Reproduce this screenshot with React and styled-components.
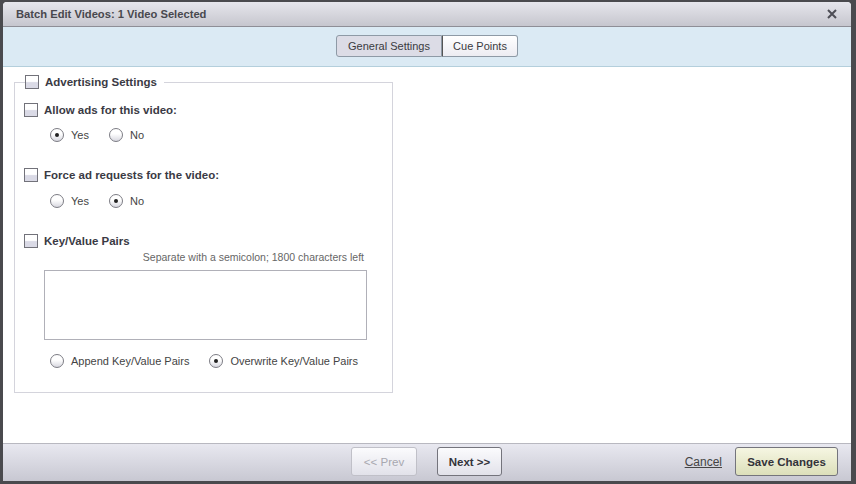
import React from "react";
import styled, { createGlobalStyle } from "styled-components";

const Global = createGlobalStyle`
  html, body { margin: 0; padding: 0; }
  body {
    width: 856px;
    height: 484px;
    overflow: hidden;
    background: #4a4a4e;
    font-family: "Liberation Sans", Arial, sans-serif;
  }
`;

const Dialog = styled.div`
  position: relative;
  margin: 2px 0 0 3px;
  width: 848px;
  height: 479px;
  display: flex;
  flex-direction: column;
  background: #fff;
  border-radius: 4px 4px 0 0;
  overflow: hidden;
`;

const TitleBar = styled.div`
  height: 24px;
  flex: none;
  display: flex;
  align-items: center;
  justify-content: space-between;
  padding: 0 14px 0 13px;
  background: linear-gradient(#e6e6ec, #c6c6ce);
  border-bottom: 1px solid #8e8e96;
  color: #48484e;
  font-size: 11.2px;
  font-weight: bold;
`;

const TabBar = styled.div`
  height: 40px;
  flex: none;
  display: flex;
  justify-content: center;
  align-items: flex-start;
  padding-top: 8px;
  box-sizing: border-box;
  background: #dbeaf4;
  border-bottom: 1px solid #b4cfdc;
`;

const Tab = styled.div`
  height: 22px;
  width: ${(p) => p.$w}px;
  box-sizing: border-box;
  display: flex;
  align-items: center;
  justify-content: center;
  font-size: 11px;
  color: #3a3a40;
  border: 1px solid #8e9aa6;
  background: ${(p) =>
    p.$active ? "#dcdce6" : "linear-gradient(#ffffff, #ececf2)"};
  border-radius: ${(p) => (p.$first ? "3px 0 0 3px" : "0 3px 3px 0")};
  border-left-color: ${(p) => (p.$first ? "#8e9aa6" : "#555")};
`;

const Body = styled.div`
  flex: 1;
  padding: 8px 0 0 11px;
`;

const Fieldset = styled.fieldset`
  width: 379px;
  height: 318px;
  box-sizing: border-box;
  margin: 0;
  padding: 0 0 0 9px;
  border: 1px solid #d4d4dc;
  color: #3a3a44;
`;

const Legend = styled.legend`
  display: flex;
  align-items: center;
  gap: 6px;
  padding: 0 7px 0 0;
  margin-left: 1px;
  font-size: 11.5px;
  font-weight: bold;
`;

const Box = styled.span`
  width: 14px;
  height: 14px;
  flex: none;
  box-sizing: border-box;
  border: 1px solid #72727a;
  background: linear-gradient(#ffffff 45%, #dadae6 55%);
`;

const CheckRow = styled.div`
  display: flex;
  align-items: center;
  gap: 6px;
  margin-top: ${(p) => p.$top}px;
  font-size: 11.5px;
  font-weight: bold;
`;

const RadioRow = styled.div`
  display: flex;
  align-items: center;
  margin-top: ${(p) => p.$top}px;
  padding-left: ${(p) => p.$left}px;
  font-size: 11px;
  color: #444;
`;

const RadioItem = styled.label`
  display: flex;
  align-items: center;
  gap: 7px;
  margin-right: ${(p) => p.$gap}px;
`;

const Radio = styled.span`
  width: 14px;
  height: 14px;
  flex: none;
  box-sizing: border-box;
  border-radius: 50%;
  border: 1px solid #7c7c84;
  background: linear-gradient(#ffffff 40%, #d8d8e0);
  display: flex;
  align-items: center;
  justify-content: center;
  &::after {
    content: "";
    width: 4px;
    height: 4px;
    border-radius: 50%;
    background: ${(p) => (p.$on ? "#222" : "transparent")};
  }
`;

const Hint = styled.div`
  font-size: 10.5px;
  color: #666;
  text-align: right;
  width: 340px;
  margin-top: 3px;
`;

const TextArea = styled.div`
  width: 323px;
  height: 70px;
  box-sizing: border-box;
  border: 1px solid #b0b0b8;
  margin: 7px 0 0 20px;
`;

const Footer = styled.div`
  height: 38px;
  flex: none;
  display: flex;
  align-items: center;
  box-sizing: border-box;
  border-top: 1px solid #b8b8c0;
  background: linear-gradient(#e8e8f0, #c8c8d2);
  padding: 0 13px 2px 348px;
`;

const Button = styled.button`
  height: 29px;
  box-sizing: border-box;
  padding: 0;
  width: ${(p) => p.$w}px;
  margin-right: ${(p) => p.$mr}px;
  border-radius: 3px;
  border: 1px solid ${(p) => (p.$disabled ? "#c0c0c8" : "#74747c")};
  background: ${(p) =>
    p.$save ? "linear-gradient(#f6f6e2, #dcdfba)" : "linear-gradient(#fbfbfd, #e2e2ea)"};
  color: ${(p) => (p.$disabled ? "#a8a8b0" : "#33333a")};
  font-family: inherit;
  font-size: 11.5px;
  font-weight: ${(p) => (p.$disabled ? "normal" : "bold")};
`;

const CancelLink = styled.a`
  margin-left: auto;
  margin-right: 13px;
  font-size: 12px;
  color: #444;
  text-decoration: underline;
`;

const CloseIcon = () => (
  <svg width="10" height="10" viewBox="0 0 10 10">
    <path d="M1 1L9 9M9 1L1 9" stroke="#4e4e56" strokeWidth="2" />
  </svg>
);

export default function App() {
  return (
    <>
      <Global />
      <Dialog>
        <TitleBar>
          <span>Batch Edit Videos: 1 Video Selected</span>
          <CloseIcon />
        </TitleBar>
        <TabBar>
          <Tab $active $first $w={106}>General Settings</Tab>
          <Tab $w={76}>Cue Points</Tab>
        </TabBar>
        <Body>
          <Fieldset>
            <Legend>
              <Box />
              Advertising Settings
            </Legend>
            <CheckRow $top={14}>
              <Box />
              Allow ads for this video:
            </CheckRow>
            <RadioRow $top={11} $left={26}>
              <RadioItem $gap={20}><Radio $on />Yes</RadioItem>
              <RadioItem><Radio />No</RadioItem>
            </RadioRow>
            <CheckRow $top={26}>
              <Box />
              Force ad requests for the video:
            </CheckRow>
            <RadioRow $top={12} $left={26}>
              <RadioItem $gap={20}><Radio />Yes</RadioItem>
              <RadioItem><Radio $on />No</RadioItem>
            </RadioRow>
            <CheckRow $top={26}>
              <Box />
              Key/Value Pairs
            </CheckRow>
            <Hint>Separate with a semicolon; 1800 characters left</Hint>
            <TextArea />
            <RadioRow $top={14} $left={26}>
              <RadioItem $gap={20}><Radio />Append Key/Value Pairs</RadioItem>
              <RadioItem><Radio $on />Overwrite Key/Value Pairs</RadioItem>
            </RadioRow>
          </Fieldset>
        </Body>
        <Footer>
          <Button $w={66} $mr={20} $disabled>&lt;&lt; Prev</Button>
          <Button $w={65} $mr={0}>Next &gt;&gt;</Button>
          <CancelLink>Cancel</CancelLink>
          <Button $w={103} $mr={0} $save>Save Changes</Button>
        </Footer>
      </Dialog>
    </>
  );
}
